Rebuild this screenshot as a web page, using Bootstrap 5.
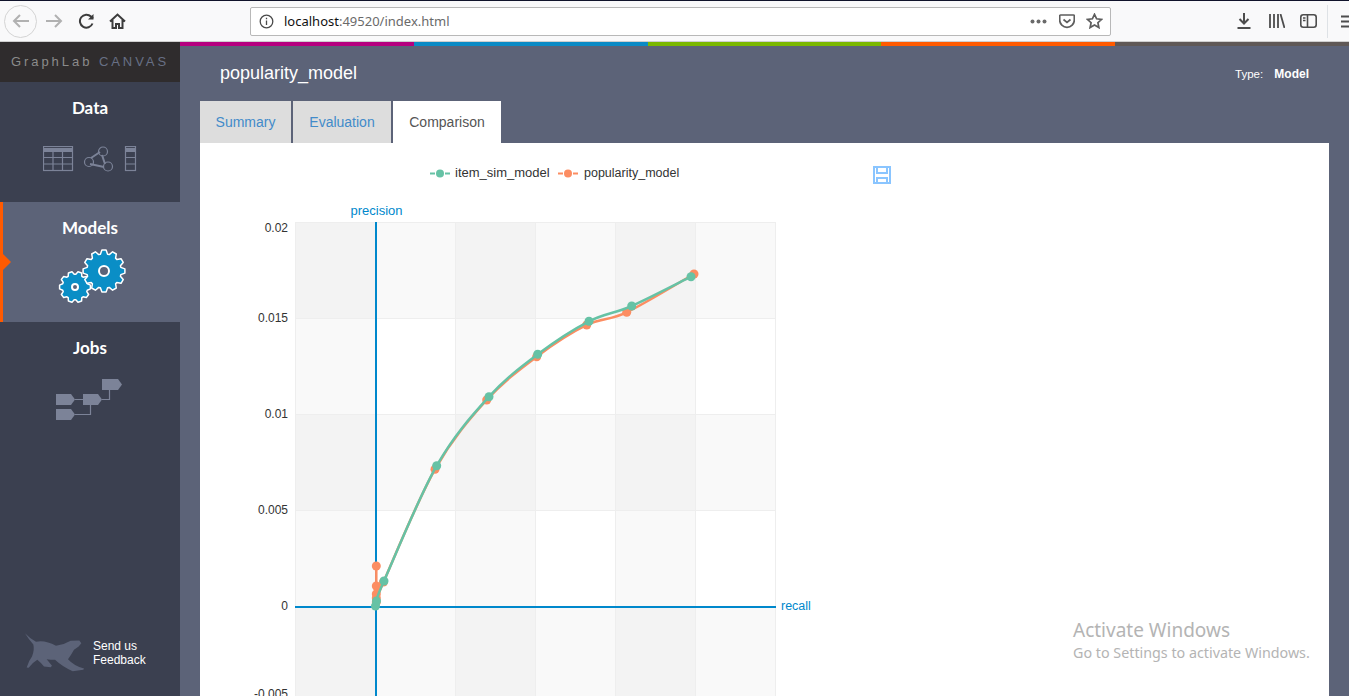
<!DOCTYPE html>
<html lang="en">
<head>
  <meta charset="UTF-8">
  <title>popularity_model</title>
  <link rel="stylesheet" href="https://cdn.jsdelivr.net/npm/bootstrap@5.3.2/dist/css/bootstrap.min.css">
  <style>
    body { font-family: "Liberation Sans", Arial, sans-serif; background: #5c6378; }
    .fx-bar { height: 42px; background: #f9f9fa; border-top: 1px solid #10132b; border-bottom: 1px solid #cfcfcf; flex: none; }
    .fx-back { width: 33px; height: 33px; margin-left: 4px; border: 1px solid #d4d4d4; border-radius: 50%; }
    .fx-fwd { margin-left: 8px; }
    .fx-reload { margin-left: 15px; }
    .fx-home { margin-left: 14px; }
    .fx-url { width: 861px; height: 29px; margin-left: 124px; padding: 0 7px 0 8px; background: #fff; border: 1px solid #b8b8b8; border-radius: 2px; font: 13px "Noto Sans", sans-serif; color: #6a6a6a; }
    .fx-url b { font-weight: 400; color: #111; margin-left: 10px; }
    .fx-pocket { margin-left: 12px; }
    .fx-star { margin-left: 11px; }
    .fx-tools { margin-left: 126px; }
    .fx-lib { margin-left: 18px; }
    .fx-panel { margin-left: 15px; }
    .fx-sep { height: 33px; margin-left: 10px; }
    .fx-menu { margin-left: 13px; }
    .side-col { width: 180px; flex: none; background: #3b4050; }
    .brand-box { height: 40px; background: #2f2c2d; font-size: 13px; letter-spacing: 2.95px; color: #8b8b8b; white-space: nowrap; }
    .brand-box span { color: #687085; }
    .side-item { height: 120px; padding-top: 14px; color: #fff; font: 700 17px/24px Lato, sans-serif; }
    .side-item svg { display: block; margin-left: auto; margin-right: auto; }
    .ic-data { margin-top: 26px; }
    .ic-gears { margin-top: 9px; }
    .ic-jobs { margin-top: 19px; }
    .side-on { background: #5c6378; position: relative; }
    .side-on::before { content: ""; position: absolute; left: 0; top: 0; bottom: 0; width: 3px; background: #ff5a00; }
    .side-on::after { content: ""; position: absolute; left: 3px; top: 52px; border: 8px solid transparent; border-left-color: #ff5a00; border-right-width: 0; }
    .feed-box { margin-top: auto; padding: 0 0 24px 25px; font-size: 12px; line-height: 14px; color: #fff; }
    .feed-text { margin-left: 8px; }
    .stripe-row { flex: none; }
    .stripe { height: 4px; }
    .st-mag { background: #b5007f; }
    .st-blue { background: #0a8ac5; }
    .st-green { background: #7ab800; }
    .st-orange { background: #ff5a00; }
    .st-grey { background: #5f5856; }
    .main-col { min-width: 0; }
    .head-row { height: 55px; padding: 1px 40px 0; flex: none; color: #fff; }
    .head-row h1 { font-size: 18px; margin: 0; font-weight: 400; }
    .head-type { font-size: 11.5px; }
    .head-type b { margin-left: 8px; font-size: 12px; }
    .tab-row { margin: 0 20px; border: 0; gap: 2px; flex: none; }
    .tab-row .nav-link { border: 0; border-radius: 0; margin: 0; padding: 11px 0; height: 42px; font-size: 14px; line-height: 20px; text-align: center; background: #ddd; color: #428bca; }
    .tab-row .nav-item:nth-child(1) .nav-link { width: 91px; }
    .tab-row .nav-item:nth-child(2) .nav-link { width: 98px; }
    .tab-row .nav-item:nth-child(3) .nav-link { width: 108px; }
    .tab-row .nav-link.active { background: #fff; color: #555; }
    .chart-box { margin: 0 20px; background: #fff; overflow: hidden; }
    .chart-box svg { display: block; font-size: 12px; }
    .tick-text { fill: #333; text-anchor: end; }
    .axis-text { fill: #0088cc; }
    .win-mark { position: absolute; left: 1073px; top: 617px; font-family: "Noto Sans", sans-serif; color: #b4b4b4; pointer-events: none; }
    .win-mark div:first-child { font-size: 19px; line-height: 26px; }
    .win-mark div:last-child { font-size: 14.3px; line-height: 20px; }
  </style>
</head>
<body class="vh-100 overflow-hidden d-flex flex-column position-relative">

<div class="fx-bar d-flex align-items-center">
  <div class="fx-back d-flex align-items-center justify-content-center">
    <svg width="18" height="16" viewBox="0 0 18 16" fill="none" stroke="#b1b1b1" stroke-width="2"><path d="M17 8H2M8 2 2 8l6 6"/></svg>
  </div>
  <svg class="fx-fwd" width="18" height="16" viewBox="0 0 18 16" fill="none" stroke="#b1b1b1" stroke-width="2"><path d="M1 8h15M10 2l6 6-6 6"/></svg>
  <svg class="fx-reload" width="17" height="16" viewBox="0 0 17 16" fill="none" stroke="#3c3c3c" stroke-width="2"><path d="M14.500 10.500A6.500 6.500 0 1 1 13 3.500l2 2"/><path d="M15.500 1v5.500h-5.500" fill="#3c3c3c" stroke="none"/></svg>
  <svg class="fx-home" width="17" height="16" viewBox="0 0 17 16" fill="none" stroke="#3c3c3c" stroke-width="2"><path d="M1 8.500 8.500 1.500 16 8.500M3.500 7v8h3.500v-4h3v4h3.500V7"/></svg>
  <div class="fx-url d-flex align-items-center">
    <svg width="15" height="15" viewBox="0 0 15 15" fill="none" stroke="#4a4a4a" stroke-width="1.300"><circle cx="7.500" cy="7.500" r="6.300"/><path d="M7.500 6.500v4.500M7.500 3.700v1.500"/></svg>
    <span><b>localhost</b>:49520/index.html</span>
    <svg class="ms-auto" width="17" height="5" viewBox="0 0 17 5" fill="#6a6a6a"><circle cx="2.500" cy="2.500" r="2"/><circle cx="8.500" cy="2.500" r="2"/><circle cx="14.500" cy="2.500" r="2"/></svg>
    <svg class="fx-pocket" width="16" height="15" viewBox="0 0 16 15" fill="none" stroke="#5e5e5e" stroke-width="1.700"><path d="M1.500 1h13a.8.8 0 0 1 .8.800V6a7.300 7.300 0 0 1-14.600 0V1.800A.8.8 0 0 1 1.500 1zM4.500 5.500 8 8.500l3.500-3"/></svg>
    <svg class="fx-star" width="17" height="16" viewBox="0 0 17 16" fill="none" stroke="#5e5e5e" stroke-width="1.700"><path d="M8.500 1.300 10.600 5.800l4.900.6-3.600 3.300 1 4.900-4.400-2.500-4.400 2.500 1-4.900-3.600-3.300 4.900-.6z"/></svg>
  </div>
  <div class="fx-tools d-flex align-items-center">
    <svg width="14" height="16" viewBox="0 0 14 16" fill="none" stroke="#4d4d4d" stroke-width="2"><path d="M7 0v10M2.500 6 7 10.500 11.500 6M.5 15h13"/></svg>
    <svg class="fx-lib" width="16" height="14" viewBox="0 0 16 14" fill="none" stroke="#4d4d4d" stroke-width="1.800"><path d="M1 0v14M5 0v14M9 0v14M11.500 0 15.500 14"/></svg>
    <svg class="fx-panel" width="17" height="14" viewBox="0 0 17 14" fill="none" stroke="#4d4d4d" stroke-width="1.600"><rect x=".8" y=".8" width="15.400" height="12.400" rx="2.500"/><path d="M7.500 1v12M3 4h2.500M3 6.500h2.500"/></svg>
    <div class="border-start fx-sep"></div>
    <svg class="fx-menu" width="8" height="13" viewBox="0 0 8 13" stroke="#4d4d4d" stroke-width="2"><path d="M0 1.500h8M0 6.500h8M0 11.500h8"/></svg>
  </div>
</div>

<div class="d-flex flex-grow-1 overflow-hidden">
  <aside class="side-col d-flex flex-column">
    <div class="brand-box d-flex align-items-center justify-content-center">GraphLab&nbsp;<span>CANVAS</span></div>

    <div class="side-item text-center">
      Data
      <svg class="ic-data" width="94" height="26" viewBox="0 0 94 26" fill="none" stroke="#7c8398" stroke-width="1.200">
        <rect x=".5" y=".5" width="29" height="24"/><path d="M0 4h30" stroke-width="4"/><path d="M10 5v20M19.500 5v20M0 11.500h30M0 18h30"/>
        <path d="M48 12 57 6M47 18l14 3M62 18 59 9" stroke-width="2"/><circle cx="46" cy="16" r="4.500"/><circle cx="60" cy="5.500" r="4.500"/><circle cx="65" cy="20.500" r="4.500"/>
        <rect x="82.500" y=".5" width="10" height="24"/><path d="M82 4h11" stroke-width="4"/><path d="M82 11.500h11M82 18h11"/>
      </svg>
    </div>

    <div class="side-item side-on text-center">
      Models
      <svg class="ic-gears" id="gears" width="72" height="55" viewBox="54 249 72 55"></svg>
    </div>

    <div class="side-item text-center">
      Jobs
      <svg class="ic-jobs" width="68" height="42" viewBox="56 379 68 42">
        <path d="M75 399.500h8M102 399.500h7.500V390M75 414.500h15.500V405" fill="none" stroke="#7c8398" stroke-width="1.200"/>
        <g fill="#7c8398">
          <path d="M56 394h15l4 5.500-4 5.500H56z"/><path d="M83 394h15l4 5.500-4 5.500H83z"/>
          <path d="M56 409h15l4 5.500-4 5.500H56z"/><path d="M102 379h16l4 5.500-4 5.500h-16z"/>
        </g>
      </svg>
    </div>

    <div class="feed-box d-flex align-items-center">
      <svg width="60" height="39" viewBox="75 42 180 116" fill="#5c6378"><path d="M75 42Q92 60 108 68 135 62 168 80 190 78 212 65L238 64 244 72 236 82 222 92Q212 110 204 120 222 140 252 148L250 152 218 156Q190 145 165 122 150 122 140 120L156 140 152 144 132 142Q122 130 112 122 98 130 86 146L80 145Q86 125 96 112 104 92 100 76 86 60 75 42Z"/></svg>
      <div class="feed-text">Send us<br>Feedback</div>
    </div>
  </aside>

  <main class="main-col flex-grow-1 d-flex flex-column">
    <div class="stripe-row d-flex">
      <div class="stripe st-mag flex-fill"></div>
      <div class="stripe st-blue flex-fill"></div>
      <div class="stripe st-green flex-fill"></div>
      <div class="stripe st-orange flex-fill"></div>
      <div class="stripe st-grey flex-fill"></div>
    </div>
    <div class="head-row d-flex align-items-center justify-content-between">
      <h1>popularity_model</h1>
      <div class="head-type">Type: <b>Model</b></div>
    </div>
    <ul class="nav nav-tabs tab-row">
      <li class="nav-item"><a class="nav-link" href="#">Summary</a></li>
      <li class="nav-item"><a class="nav-link" href="#">Evaluation</a></li>
      <li class="nav-item"><a class="nav-link active" href="#">Comparison</a></li>
    </ul>
    <div class="chart-box flex-grow-1">
      <svg id="chart" width="700" height="560" viewBox="200 143 700 560"></svg>
    </div>
  </main>
</div>

<div class="win-mark">
  <div>Activate Windows</div>
  <div>Go to Settings to activate Windows.</div>
</div>

<script>
  // gears for the Models item
  function gearPath(cx, cy, r, teeth) {
    let d = '';
    for (let i = 0; i < teeth; i++) {
      const step = Math.PI * 2 / teeth;
      const a = i * step;
      [[-0.27, r * 0.82], [-0.13, r], [0.13, r], [0.27, r * 0.82]].forEach((p, j) => {
        const t = a + p[0] * step * 1.5;
        d += (i === 0 && j === 0 ? 'M' : 'L') + (cx + Math.cos(t) * p[1]).toFixed(1) + ' ' + (cy + Math.sin(t) * p[1]).toFixed(1);
      });
    }
    return d + 'Z';
  }
  function gearSvg(cx, cy, r, teeth, hole) {
    return `<path d="${gearPath(cx, cy, r, teeth)}" fill="#0a8ec6" stroke="#fff" stroke-width="1.500" stroke-linejoin="round"/>
      <circle cx="${cx}" cy="${cy}" r="${hole}" fill="#5c6378" stroke="#fff" stroke-width="2"/>`;
  }
  document.getElementById('gears').innerHTML = gearSvg(75, 287, 15.5, 10, 3) + gearSvg(104, 271, 21, 12, 5);

  // precision / recall chart, coordinates are page pixels
  const green = [[375.5,606],[376.5,601],[384,581],[436.7,465.7],[489,396.7],[537.7,354.3],[589,321.3],[631.7,306],[691,276.7]];
  const orange = [[376.3,566],[376.3,586],[376.3,594],[376.3,598],[376.3,602],[383.5,582],[435,469.3],[486.7,400],[536.7,356.7],[586.7,325],[626.7,312.3],[694,274]];

  function curve(pts) {
    let d = `M${pts[0][0]} ${pts[0][1]}`;
    for (let i = 0; i < pts.length - 1; i++) {
      const p0 = pts[i - 1] || pts[i], p1 = pts[i], p2 = pts[i + 1], p3 = pts[i + 2] || p2;
      d += `C${p1[0] + (p2[0] - p0[0]) / 6} ${p1[1] + (p2[1] - p0[1]) / 6} ${p2[0] - (p3[0] - p1[0]) / 6} ${p2[1] - (p3[1] - p1[1]) / 6} ${p2[0]} ${p2[1]}`;
    }
    return d;
  }

  let chart = '';
  [295.5, 455.5, 615.5].forEach(x => { chart += `<rect x="${x}" y="222" width="80" height="490" fill="#000" fill-opacity=".022"/>`; });
  [222.5, 414.5, 606.5].forEach(y => { chart += `<rect x="295.5" y="${y}" width="480" height="96" fill="#000" fill-opacity=".022"/>`; });
  [295.5, 455.5, 535.5, 615.5, 695.5, 775.5].forEach(x => { chart += `<path d="M${x} 222V712" stroke="#eee"/>`; });
  [222.5, 318.5, 414.5, 510.5, 702.5].forEach(y => { chart += `<path d="M295 ${y}H776" stroke="#eee"/>`; });
  [['0.02',232],['0.015',322],['0.01',418],['0.005',514],['0',610],['-0.005',698]].forEach(t => {
    chart += `<text class="tick-text" x="288" y="${t[1]}">${t[0]}</text>`;
  });
  chart += `<path d="M376 222V712M295 607H776" stroke="#0088cc" stroke-width="2" fill="none"/>
    <text class="axis-text" x="376.500" y="215" text-anchor="middle" font-size="13">precision</text>
    <text class="axis-text" x="781" y="610" font-size="12.500">recall</text>`;
  [[orange, '#fc8d62'], [green, '#66c2a5']].forEach(s => {
    chart += `<path d="${curve(s[0])}" fill="none" stroke="${s[1]}" stroke-width="2.500"/>`;
    s[0].forEach(p => { chart += `<circle cx="${p[0]}" cy="${p[1]}" r="4.500" fill="${s[1]}"/>`; });
  });
  [[430, '#66c2a5', 'item_sim_model', 455, 13], [558, '#fc8d62', 'popularity_model', 584, 12.5]].forEach(l => {
    chart += `<path d="M${l[0]} 173.500h20" stroke="${l[1]}" stroke-width="2" stroke-dasharray="5 10"/>
      <circle cx="${l[0] + 10}" cy="173.500" r="4" fill="${l[1]}"/>
      <text x="${l[3]}" y="177" fill="#333" font-size="${l[4]}">${l[2]}</text>`;
  });
  chart += `<g fill="none" stroke="#8ac5ff" stroke-width="2"><path d="M874 167h16v16h-16z"/><path d="M877 167v6h10v-6M877 183v-5h10v5"/></g>`;
  document.getElementById('chart').innerHTML = chart;
</script>
<script src="https://cdn.jsdelivr.net/npm/bootstrap@5.3.2/dist/js/bootstrap.bundle.min.js"></script>
</body>
</html>
